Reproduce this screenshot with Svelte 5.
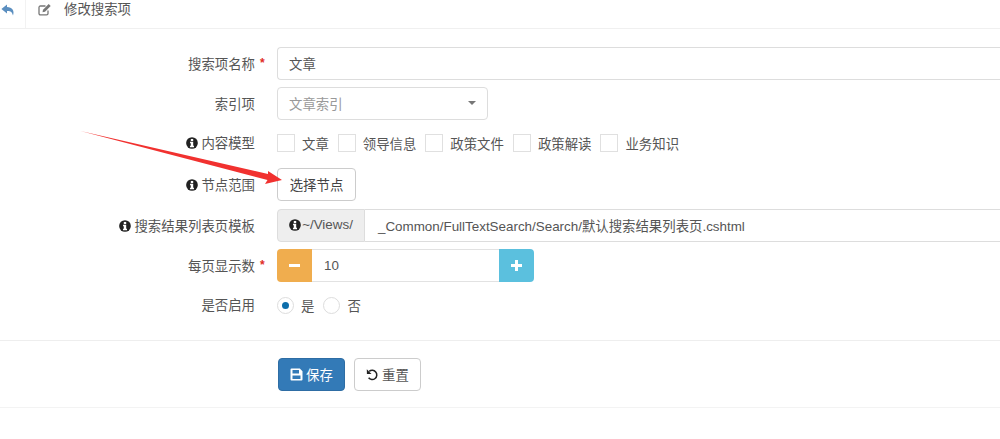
<script>
  const models = ['文章', '领导信息', '政策文件', '政策解读', '业务知识'];
</script>

{#snippet info()}
  <svg class="info" viewBox="0 0 16 16" aria-hidden="true"><circle cx="8" cy="8" r="7.8" fill="#222"/><rect x="6.400" y="2.600" width="3.200" height="2.800" fill="#fff"/><path d="M5.400 6.400h4.200v5.400h1.100v1.800H5.300v-1.800h1.100V8.200h-1z" fill="#fff"/></svg>
{/snippet}

<div class="page">
  <header class="top">
    <div class="back">
      <svg viewBox="0 0 14 12" width="14" height="12" aria-hidden="true"><path d="M6 .4.400 5l5.600 4.600V7c3.200-.2 5.200.7 6 4.600 1.800-4.800-.8-8.300-6-8.500z" fill="#5b8fc0"/></svg>
    </div>
    <svg class="edit" viewBox="0 0 14 13" width="14" height="13" aria-hidden="true"><path d="M10 7.500v3a1.400 1.400 0 0 1-1.400 1.400H2.400A1.400 1.400 0 0 1 1 10.500V4.400A1.400 1.400 0 0 1 2.400 3H7.500" fill="none" stroke="#777" stroke-width="1.300"/><path d="M5 6.800 10.700 1.100l2 2-5.700 5.700-2.500.5z" fill="#777"/></svg>
    <span class="title">修改搜索项</span>
  </header>

  <form class="form">
    <div class="row r-name">
      <div class="label">搜索项名称<i class="req">*</i></div>
      <div class="field"><div class="control grow">文章</div></div>
    </div>
    <div class="row r-index">
      <div class="label">索引项</div>
      <div class="field"><div class="control select"><span>文章索引</span><b class="caret"></b></div></div>
    </div>
    <div class="row r-model">
      <div class="label">{@render info()}内容模型</div>
      <div class="field checks">
        {#each models as m}
          <span class="check"><span class="box"></span>{m}</span>
        {/each}
      </div>
    </div>
    <div class="row r-node">
      <div class="label">{@render info()}节点范围</div>
      <div class="field"><button type="button" class="btn">选择节点</button></div>
    </div>
    <div class="row r-tpl">
      <div class="label">{@render info()}搜索结果列表页模板</div>
      <div class="field group">
        <span class="addon">{@render info()}~/Views/</span>
        <div class="control path">_Common/FullTextSearch/Search/默认搜索结果列表页.cshtml</div>
      </div>
    </div>
    <div class="row r-size">
      <div class="label">每页显示数<i class="req">*</i></div>
      <div class="field spinner">
        <span class="minus"><span class="bar"></span></span>
        <span class="num">10</span>
        <span class="plus"><span class="bar"></span><span class="bar v"></span></span>
      </div>
    </div>
    <div class="row r-on">
      <div class="label">是否启用</div>
      <div class="field radios">
        <span class="radio on"></span><span class="rtext">是</span>
        <span class="radio"></span><span class="rtext">否</span>
      </div>
    </div>
    <div class="actions">
      <button type="button" class="btn primary">
        <svg viewBox="0 0 13 13" width="13" height="13" aria-hidden="true"><path fill-rule="evenodd" d="M1.500.5h8.300l2.700 2.700v8.300a1 1 0 0 1-1 1H1.500a1 1 0 0 1-1-1v-10a1 1 0 0 1 1-1zM2.500 2v3.500h6.500V2zM2.500 7.500V11h8V7.500z" fill="#fff"/></svg>
        保存
      </button>
      <button type="button" class="btn reset">
        <svg viewBox="0 0 13 13" width="13" height="13" aria-hidden="true"><path d="M3.200 3.400A4.600 4.600 0 1 1 2.600 9.800" fill="none" stroke="#222" stroke-width="1.500"/><path d="M.8 1.200.9 6h4.600z" fill="#222"/></svg>
        重置
      </button>
    </div>
  </form>

  <svg class="arrow" viewBox="0 0 210 60" width="210" height="60" aria-hidden="true">
    <path d="M.5 1 188 44 188 41 202 50 185 54 187.500 50z" fill="#f1312f"/>
  </svg>
</div>

<style>
  :global(body) { margin: 0; background: #fff; }
  .page {
    position: relative;
    height: 439px;
    overflow: hidden;
    font-family: "Liberation Sans", "Noto Sans CJK SC", sans-serif;
    font-size: 13.4px;
    color: #555;
  }
  .top {
    display: flex;
    align-items: flex-start;
    height: 29px;
    box-sizing: border-box;
    border-bottom: 1px solid #f0f0f0;
  }
  .back {
    width: 26px;
    height: 28px;
    box-sizing: border-box;
    padding: 4px 0 0 1px;
    border-right: 1px solid #f2f2f2;
    flex: none;
  }
  .back svg, .edit { display: block; }
  .edit { margin: 3px 0 0 12px; }
  .title { margin: 1px 0 0 12px; color: #555; line-height: 18px; }
  .form { padding-top: 18px; }
  .row { display: flex; align-items: center; }
  .label {
    width: 255px;
    flex: none;
    text-align: right;
    position: relative;
    white-space: nowrap;
    padding-bottom: 2px;
  }
  .req {
    position: absolute;
    left: 260px;
    top: 3px;
    color: #e02b26;
    font-style: normal;
    font-weight: bold;
    font-size: 12px;
  }
  .info {
    display: inline-block;
    width: 12px;
    height: 12px;
    margin-right: 3px;
    vertical-align: -1px;
  }
  .field { margin-left: 22px; flex: 1; min-width: 0; }
  .control {
    box-sizing: border-box;
    height: 33px;
    border: 1px solid #ddd;
    border-right: 0;
    border-radius: 4px 0 0 4px;
    padding: 0 11px 2px;
    display: flex;
    align-items: center;
    background: #fff;
  }
  .r-name { height: 33px; margin-bottom: 7px; }
  .r-index { height: 33px; margin-bottom: 13px; }
  .r-model { height: 20px; margin-bottom: 15px; }
  .r-node { height: 33px; margin-bottom: 8px; }
  .r-tpl { height: 33px; margin-bottom: 7px; }
  .r-size { height: 33px; margin-bottom: 13px; }
  .r-on { height: 20px; }
  .select {
    width: 211px;
    border-right: 1px solid #ddd;
    border-radius: 4px;
    justify-content: space-between;
    color: #999;
    padding-right: 11px;
  }
  .caret {
    width: 0;
    height: 0;
    border: 4px solid transparent;
    border-top-color: #777;
    border-bottom: 0;
  }
  .checks { display: flex; align-items: center; }
  .check { display: inline-flex; align-items: center; margin-right: 9px; }
  .box {
    width: 16px;
    height: 16px;
    border: 1px solid #e0e0e0;
    margin-right: 7px;
    background: #fff;
  }
  .btn {
    box-sizing: border-box;
    font: inherit;
    height: 33px;
    padding: 0 11px 2px;
    border: 1px solid #ccc;
    border-radius: 4px;
    background: #fff;
    color: #444;
    display: inline-flex;
    align-items: center;
    gap: 3px;
  }
  .btn svg { margin-top: 2px; }
  .r-node .btn { width: 79px; justify-content: center; }
  .group { display: flex; }
  .addon {
    box-sizing: border-box;
    width: 88px;
    height: 33px;
    flex: none;
    display: flex;
    align-items: center;
    justify-content: center;
    background: #eee;
    border: 1px solid #ddd;
    border-radius: 4px 0 0 4px;
    white-space: nowrap;
    padding-bottom: 2px;
  }
  .addon .info { margin-right: 1px; }
  .path { flex: 1; border-left: 0; border-radius: 0; padding-left: 13px; }
  .spinner { display: flex; height: 33px; }
  .minus, .plus {
    width: 35px;
    flex: none;
    box-sizing: border-box;
    position: relative;
    display: flex;
    align-items: center;
    justify-content: center;
  }
  .minus { background: #f0ad4e; border-radius: 4px 0 0 4px; }
  .plus { background: #5bc0de; border-radius: 0 4px 4px 0; }
  .bar { width: 11px; height: 3px; background: #fff; }
  .bar.v { position: absolute; width: 3px; height: 11px; }
  .num {
    box-sizing: border-box;
    width: 187px;
    flex: none;
    border: 1px solid #e2e2e2;
    border-left: 0;
    border-right: 0;
    padding-left: 12px;
    display: flex;
    align-items: center;
  }
  .radios { display: flex; align-items: center; }
  .radio {
    box-sizing: border-box;
    width: 17px;
    height: 17px;
    border: 1px solid #ddd;
    border-radius: 50%;
    position: relative;
    flex: none;
  }
  .radio.on::after {
    content: "";
    position: absolute;
    left: 4px;
    top: 4px;
    width: 7px;
    height: 7px;
    border-radius: 50%;
    background: #0e6eab;
  }
  .rtext { margin: 0 7px; padding-bottom: 1px; }
  .rtext + .radio { margin-left: 2px; }
  .actions {
    margin-top: 25px;
    height: 68px;
    border-top: 1px solid #eee;
    border-bottom: 1px solid #f3f3f3;
    padding: 17px 0 0 278px;
    box-sizing: border-box;
    display: flex;
    align-items: flex-start;
    gap: 9px;
  }
  .primary {
    width: 67px;
    background: #337ab7;
    border-color: #2e6da4;
    color: #fff;
    justify-content: center;
    padding: 0 0 2px;
  }
  .reset { width: 67px; justify-content: center; padding: 0 0 2px; color: #555; }
  .arrow { position: absolute; left: 80px; top: 130px; }
</style>
